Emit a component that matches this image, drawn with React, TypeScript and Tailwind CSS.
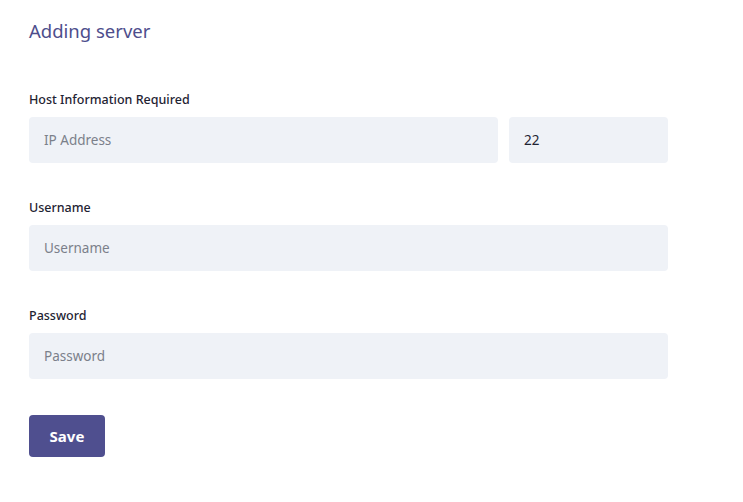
import React, { useState } from 'react';

const font = { fontFamily: '"Noto Sans", "Open Sans", sans-serif' };

const Field: React.FC<{
  label: string;
  placeholder: string;
  type?: string;
}> = ({ label, placeholder, type = 'text' }) => (
  <div className="flex flex-col mt-[36px]">
    <label className="text-[12.5px] leading-[16px] font-medium text-[#1f2433] mb-[9px] pt-[1px]">{label}</label>
    <input
      type={type}
      placeholder={placeholder}
      className="h-[46px] w-full rounded-[4px] bg-[#eff2f7] px-[15px] text-[13.5px] text-[#1f2433] placeholder:text-[#7b808a] outline-none"
    />
  </div>
);

const App: React.FC = () => {
  const [port, setPort] = useState('22');

  return (
    <div className="min-h-screen bg-white" style={font}>
      <div className="w-[639px] ml-[29px] pt-[19px]">
        <h1 className="text-[18.5px] leading-[24px] text-[#4e4e8c]">Adding server</h1>

        {/* Host */}
        <div className="flex flex-col mt-[48px]">
          <label className="text-[12.5px] leading-[16px] font-medium text-[#1f2433] mb-[9px] pt-[1px]">
            Host Information Required
          </label>
          <div className="flex gap-[11px]">
            <input
              type="text"
              placeholder="IP Address"
              className="h-[46px] flex-1 min-w-0 rounded-[4px] bg-[#eff2f7] px-[15px] text-[13.5px] text-[#1f2433] placeholder:text-[#7b808a] outline-none"
            />
            <input
              type="text"
              value={port}
              onChange={e => setPort(e.target.value)}
              className="h-[46px] w-[159px] rounded-[4px] bg-[#eff2f7] px-[15px] text-[13.5px] text-[#1f2433] outline-none"
            />
          </div>
        </div>

        <Field label="Username" placeholder="Username" />
        <Field label="Password" placeholder="Password" type="password" />

        <button className="mt-[36px] h-[42px] w-[76px] rounded-[4px] bg-[#4f4f8f] text-[15px] font-bold text-white">
          Save
        </button>
      </div>
    </div>
  );
};

export default App;
